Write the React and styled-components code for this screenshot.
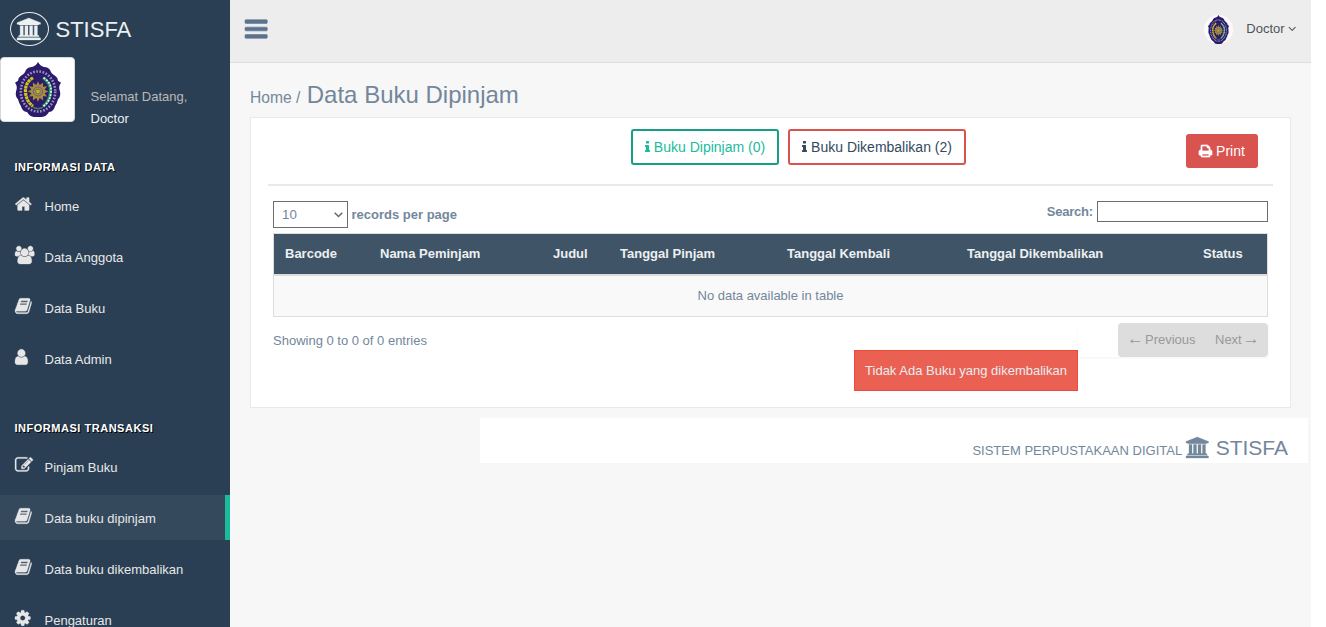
import React from 'react';
import styled, { createGlobalStyle, css } from 'styled-components';

const GlobalStyle = createGlobalStyle`
  *, *::before, *::after { box-sizing: border-box; }
  body {
    margin: 0;
    background: #fff;
    color: #73879c;
    font-family: "Liberation Sans", Arial, sans-serif;
    font-size: 13px;
    line-height: 19px;
    overflow: hidden;
  }
`;

const PATHS = {
  home: ['64 0 1664 1792', 'M1472 992v480q0 26-19 45t-45 19h-384v-384h-256v384h-384q-26 0-45-19t-19-45v-480q0-1 .5-3t.5-3l575-474 575 474q1 2 1 6zm223-69l-62 74q-8 9-21 11h-3q-13 0-21-7l-692-577-692 577q-12 8-24 7-13-2-21-11l-62-74q-8-10-7-23.5t11-21.5l719-599q32-26 76-26t76 26l244 204v-195q0-14 9-23t23-9h192q14 0 23 9t9 23v408l219 182q10 8 11 21.5t-7 23.5z'],
  users: ['-64 0 1920 1792', 'M529 896q-162 5-265 128h-134q-82 0-138-40.5t-56-118.5q0-353 124-353 6 0 43.5 21t97.5 42.5 119 21.5q67 0 133-23-5 37-5 66 0 159 93 293zm1071 637q0 120-73 189.5t-194 69.5h-874q-121 0-194-69.5t-73-189.5q0-53 3.5-103.5t14-109 26.5-108.5 43-97.5 62-81 85.5-53.5 111.5-20q10 0 43 21.5t73 48 107 48 135 21.5 135-21.5 107-48 73-48 43-21.5q61 0 111.5 20t85.5 53.5 62 81 43 97.5 26.5 108.5 14 109 3.5 103.5zm-1024-1277q0 106-75 181t-181 75-181-75-75-181 75-181 181-75 181 75 75 181zm704 384q0 159-112.5 271.5t-271.5 112.5-271.5-112.5-112.5-271.5 112.5-271.5 271.5-112.5 271.5 112.5 112.5 271.5zm576 225q0 78-56 118.5t-138 40.5h-134q-103-123-265-128 93-134 93-293 0-29-5-66 66 23 133 23 59 0 119-21.5t97.5-42.5 43.5-21q124 0 124 353zm-128-609q0 106-75 181t-181 75-181-75-75-181 75-181 181-75 181 75 75 181z'],
  book: ['64 0 1664 1792', 'M1703 478q40 57 18 129l-275 906q-19 64-76.5 107.5t-122.5 43.5h-923q-77 0-148.5-53.5t-99.5-131.5q-24-67-2-127 0-4 3-27t4-37q1-8-3-21.5t-3-19.5q2-11 8-21t16.5-23.5 16.5-23.5q23-38 45-91.5t30-91.5q3-10 .5-30t-.5-28q3-11 17-28t17-23q21-36 42-92t25-90q1-9-2.5-32t.5-28q4-13 22-30.5t22-22.5q19-26 42.5-84.5t27.5-96.5q1-8-3-25.5t-2-26.5q2-8 9-18t18-23 17-21q8-12 16.5-30.5t15-35 16-36 19.5-32 26.5-23.5 36-11.5 47.5 5.5l-1 3q38-9 51-9h761q74 0 114 56t18 130l-274 906q-36 119-71.5 153.5t-128.5 34.5h-869q-27 0-38 15-11 16-1 43 24 70 144 70h923q29 0 56-15.5t35-41.5l300-987q7-22 5-57 38 15 59 43zm-1064 2q-4 13 2 22.5t20 9.5h608q13 0 25.5-9.5t16.5-22.5l21-64q4-13-2-22.5t-20-9.5h-608q-13 0-25.5 9.5t-16.5 22.5zm-83 256q-4 13 2 22.5t20 9.5h608q13 0 25.5-9.5t16.5-22.5l21-64q4-13-2-22.5t-20-9.5h-608q-13 0-25.5 9.5t-16.5 22.5z'],
  user: ['256 0 1280 1792', 'M1536 1399q0 109-62.5 187t-150.5 78h-854q-88 0-150.5-78t-62.5-187q0-85 8.5-160.5t31.5-152 58.5-131 94-89 134.5-34.5q131 128 313 128t313-128q76 0 134.5 34.5t94 89 58.5 131 31.5 152 8.5 160.5zm-256-887q0 159-112.5 271.5t-271.5 112.5-271.5-112.5-112.5-271.5 112.5-271.5 271.5-112.5 271.5 112.5 112.5 271.5z'],
  edit: ['0 0 1792 1792', 'M888 1184l116-116-152-152-116 116v56h96v96h56zm440-720q-16-16-33 1l-350 350q-17 17-1 33t33-1l350-350q17-17 1-33zm80 594v190q0 119-84.5 203.5t-203.5 84.5h-832q-119 0-203.5-84.5t-84.5-203.5v-832q0-119 84.5-203.5t203.5-84.5h832q63 0 117 25 15 7 18 23 3 17-9 29l-49 49q-14 14-32 8-23-6-45-6h-832q-66 0-113 47t-47 113v832q0 66 47 113t113 47h832q66 0 113-47t47-113v-126q0-13 9-22l64-64q15-15 35-7t20 29zm-96-738l288 288-672 672h-288v-288zm444 132l-92 92-288-288 92-92q28-28 68-28t68 28l152 152q28 28 28 68t-28 68z'],
  cog: ['128 0 1536 1792', 'M1152 896q0-106-75-181t-181-75-181 75-75 181 75 181 181 75 181-75 75-181zm512-109v222q0 12-8 23t-20 13l-185 28q-19 54-39 91 35 50 107 138 10 12 10 25t-9 23q-27 37-99 108t-94 71q-12 0-26-9l-138-108q-44 23-91 38-16 136-29 186-7 28-36 28h-222q-14 0-24.5-8.5t-11.5-21.5l-28-184q-49-16-90-37l-141 107q-10 9-25 9-14 0-25-11-126-114-165-168-7-10-7-23 0-12 8-23 15-21 51-66.5t54-70.5q-27-50-41-99l-183-27q-13-2-21-12.5t-8-23.5v-222q0-12 8-23t19-13l186-28q14-46 39-92-40-57-107-138-10-12-10-24 0-10 9-23 26-36 98.5-107.5t94.5-71.5q13 0 26 10l138 107q44-23 91-38 16-136 29-186 7-28 36-28h222q14 0 24.5 8.5t11.5 21.5l28 184q49 16 90 37l142-107q9-9 24-9 13 0 25 10 129 119 165 170 7 8 7 22 0 12-8 23-15 21-51 66.5t-54 70.5q26 50 41 98l183 28q13 2 21 12.5t8 23.5z'],
  university: ['-128 0 1920 1792', 'M832 0l960 384v128h-128q0 26-20.5 45t-48.5 19h-1526q-28 0-48.5-19t-20.5-45h-128v-128zm-704 640h256v768h128v-768h256v768h128v-768h256v768h128v-768h256v768h59q28 0 48.5 19t20.5 45v64h-1664v-64q0-26 20.5-45t48.5-19h59v-768zm1595 960q28 0 48.5 19t20.5 45v128h-1920v-128q0-26 20.5-45t48.5-19h1782z'],
  print: ['64 0 1664 1792', 'M448 1536h896v-256h-896v256zm0-640h896v-384h-160q-40 0-68-28t-28-68v-160h-640v640zm1152 64q0-26-19-45t-45-19-45 19-19 45 19 45 45 19 45-19 19-45zm128 0v416q0 13-9.5 22.5t-22.5 9.5h-224v160q0 40-28 68t-68 28h-960q-40 0-68-28t-28-68v-160h-224q-13 0-22.5-9.5t-9.5-22.5v-416q0-79 56.5-135.5t135.5-56.5h64v-544q0-40 28-68t68-28h672q40 0 88 20t76 48l152 152q28 28 48 76t20 88v256h64q79 0 135.5 56.5t56.5 135.5z'],
  info: ['576 0 640 1792', 'M1216 1344v128q0 26-19 45t-45 19h-512q-26 0-45-19t-19-45v-128q0-26 19-45t45-19h64v-384h-64q-26 0-45-19t-19-45v-128q0-26 19-45t45-19h384q26 0 45 19t19 45v576h64q26 0 45 19t19 45zm-128-1152v192q0 26-19 45t-45 19h-256q-26 0-45-19t-19-45v-192q0-26 19-45t45-19h256q26 0 45 19t19 45z'],
  bars: ['128 0 1536 1792', 'M1664 1344v128q0 26-19 45t-45 19h-1408q-26 0-45-19t-19-45v-128q0-26 19-45t45-19h1408q26 0 45 19t19 45zm0-512v128q0 26-19 45t-45 19h-1408q-26 0-45-19t-19-45v-128q0-26 19-45t45-19h1408q26 0 45 19t19 45zm0-512v128q0 26-19 45t-45 19h-1408q-26 0-45-19t-19-45v-128q0-26 19-45t45-19h1408q26 0 45 19t19 45z'],
  angle: ['320 0 1152 1792', 'M1395 736q0 13-10 23l-466 466q-10 10-23 10t-23-10l-466-466q-10-10-10-23t10-23l50-50q10-10 23-10t23 10l393 393 393-393q10-10 23-10t23 10l50 50q10 10 10 23z'],
};

const Svg = styled.svg`
  display: block;
  flex: none;
  height: ${(p) => p.$size}px;
  fill: currentColor;
  stroke: currentColor;
  stroke-width: ${(p) => p.$weight};
  overflow: visible;
`;

function Icon({ name, size, weight = 0 }) {
  const [box, d] = PATHS[name];
  const width = (Number(box.split(' ')[2]) / 1792) * size;
  return (
    <Svg viewBox={box} width={width} $size={size} $weight={weight} aria-hidden="true">
      <path d={d} />
    </Svg>
  );
}

const Emblem = styled.svg`
  display: block;
  width: ${(p) => p.$w}px;
  height: ${(p) => p.$h}px;
`;

function Crest({ w, h }) {
  const rays = Array.from({ length: 12 }, (_, i) => i * 30);
  return (
    <Emblem $w={w} $h={h} viewBox="0 0 46 56" preserveAspectRatio="none" aria-hidden="true">
      <path
        fill="#2c1a6b"
        d="M23 0Q25 4 29 5Q33 5 35 8Q36 12 40 14Q43 16 43 19L46 21Q43 25 45 30Q46 35 43 38Q42 42 40 45Q39 50 34 51Q31 56 27 56H19Q15 56 12 51Q7 50 6 45Q4 42 3 38Q0 35 1 30Q3 25 0 21L3 19Q3 16 6 14Q10 12 11 8Q13 5 17 5Q21 4 23 0Z"
      />
      <ellipse cx="23" cy="30" rx="17.2" ry="20.4" fill="none" stroke="#b4b0cd" strokeWidth="2.6" strokeDasharray="1.7 1.5" opacity=".8" />
      <ellipse cx="23" cy="30" rx="15.4" ry="18.4" fill="#2c1a6b" />
      <path d="M18 16Q10 21 10.5 30Q11 40 18 45" fill="none" stroke="#d2c51d" strokeWidth="3.2" strokeDasharray="3 .6" />
      <path d="M28 16Q36 21 35.5 30Q35 40 28 45" fill="none" stroke="#249662" strokeWidth="3.2" />
      <path d="M28.6 16Q36.6 21 36 30Q35.5 40 28.5 45" fill="none" stroke="#e9efed" strokeWidth="1.7" strokeDasharray="2 1.2" />
      <path d="M18 46Q23 49 28 46" fill="none" stroke="#40805a" strokeWidth="1.6" />
      <g fill="#a58f39">
        {rays.map((a) => (
          <path key={a} d="M20.6 25L23 19.5L25.4 25Z" transform={`rotate(${a} 23 30)`} />
        ))}
        <circle cx="23" cy="30" r="6.8" />
      </g>
      <circle cx="23" cy="30" r="4.6" fill="none" stroke="#67558a" strokeWidth=".9" />
      <circle cx="23" cy="30" r="2.3" fill="#cab12c" stroke="#5b4788" strokeWidth=".6" />
    </Emblem>
  );
}

const Page = styled.div`
  display: flex;
  width: 1311px;
  height: 627px;
  overflow: hidden;
  background: #f7f7f7;
`;

const Sidebar = styled.aside`
  flex: none;
  width: 230px;
  height: 627px;
  overflow: hidden;
  background: #2a3f54;
  color: #ecf0f1;
`;

const Brand = styled.div`
  display: flex;
  align-items: center;
  height: 57px;
  padding-left: 10px;
  gap: 6.5px;
  font-size: 22px;
`;

const BrandName = styled.span`
  padding-top: 2px;
`;

const BrandRing = styled.span`
  display: flex;
  align-items: center;
  justify-content: center;
  width: 39px;
  height: 34px;
  padding-right: 1px;
  border: 1px solid #eaeaea;
  border-radius: 50%;
`;

const Profile = styled.div`
  display: flex;
  height: 65px;
`;

const Portrait = styled.div`
  display: flex;
  align-items: center;
  justify-content: center;
  width: 75px;
  height: 65px;
  background: #fff;
  border: 1px solid #d5d9dd;
  border-radius: 4px;
`;

const Welcome = styled.div`
  padding: 30px 0 0 15.5px;
  color: #bab8b8;
`;

const UserName = styled.div`
  margin-top: 3px;
  color: #ecf0f1;
`;

const MenuTitle = styled.h3`
  margin: ${(p) => p.$top}px 0 0;
  padding-left: 14.5px;
  height: 23px;
  color: #fff;
  font-size: 11px;
  font-weight: bold;
  letter-spacing: 0.52px;
  line-height: 14px;
  text-transform: uppercase;
  text-shadow: 1px 1px #000;
`;

const MenuItem = styled.a`
  display: flex;
  align-items: center;
  height: 45px;
  margin-bottom: 6px;
  padding: 1px 0 0 14.5px;
  color: #e7e7e7;
  font-weight: 500;
  ${(p) => p.$active && css`
    background: #35495d;
    border-right: 5px solid #1abb9c;
  `}
`;

const MenuIcon = styled.span`
  width: 30px;
  margin-top: -4px;
`;

const Main = styled.div`
  flex: 1;
  min-width: 0;
`;

const TopBar = styled.header`
  display: flex;
  justify-content: space-between;
  height: 63px;
  padding: 0 15px;
  background: #ededed;
  border-bottom: 1px solid #d9dee4;
`;

const Toggle = styled.span`
  padding-top: 16px;
  color: #5a738e;
`;

const Account = styled.div`
  display: flex;
  align-items: center;
  height: 57px;
  color: #515356;
`;

const Avatar = styled.span`
  display: flex;
  align-items: center;
  justify-content: center;
  width: 29px;
  height: 29px;
  margin: 2px 13.5px 0 0;
  border-radius: 50%;
  background: #fafafa;
`;

const Caret = styled.span`
  margin-left: 3px;
`;

const Title = styled.div`
  display: flex;
  align-items: baseline;
  height: 54px;
  padding: 17px 0 0 20px;
  font-size: 24px;
  line-height: 30px;
`;

const Crumb = styled.span`
  margin-right: 6.5px;
  font-size: 15.6px;
`;

const Card = styled.section`
  height: 291px;
  margin: 0 20px;
  padding: 0 17px;
  background: #fff;
  border: 1px solid #e6e9ed;
`;

const Actions = styled.div`
  display: flex;
  height: 68px;
  padding: 11px 15px 0 363px;
  border-bottom: 2px solid #e6e9ed;
  font-size: 14px;
`;

const FilterButton = styled.a`
  display: flex;
  align-items: center;
  justify-content: center;
  gap: 4px;
  width: ${(p) => p.$w}px;
  height: 36px;
  margin-right: 9px;
  border: 2px solid ${(p) => p.$border};
  border-radius: 3px;
  color: ${(p) => p.$color};
  white-space: nowrap;
`;

const PrintButton = styled.a`
  display: flex;
  align-items: center;
  justify-content: center;
  gap: 4px;
  width: 72px;
  height: 34px;
  margin: 5px 0 0 auto;
  border-radius: 3px;
  background: #d9534f;
  color: #fff;
`;

const TableArea = styled.div`
  padding: 15px 5px 0;
`;

const Controls = styled.div`
  display: flex;
  justify-content: space-between;
  height: 32px;
  font-weight: bold;
`;

const Length = styled.label`
  display: flex;
  gap: 3.5px;
  line-height: 27px;
`;

const Select = styled.span`
  display: flex;
  align-items: center;
  justify-content: space-between;
  width: 75px;
  height: 27px;
  padding: 0 4px 0 8px;
  border: 1px solid #6d6d6d;
  font-weight: normal;
  font-size: 13.33px;
`;

const SearchLabel = styled.label`
  display: flex;
  gap: 4px;
  line-height: 21px;
  letter-spacing: -0.2px;
`;

const SearchInput = styled.input`
  width: 171px;
  height: 21px;
  border: 1px solid #6d6d6d;
  background: #fff;
`;

const Table = styled.div`
  height: 84px;
  border: 1px solid #ddd;
`;

const HeadRow = styled.div`
  display: grid;
  grid-template-columns: 95px 173px 67px 167px 180px 236px 1fr;
  height: 42px;
  padding-left: 11px;
  background: #405467;
  border-bottom: 2px solid #ddd;
  color: #ecf0f1;
  font-weight: bold;
  line-height: 40px;
`;

const EmptyRow = styled.div`
  height: 40px;
  background: #f9f9f9;
  line-height: 40px;
  text-align: center;
`;

const TableFoot = styled.div`
  display: flex;
  justify-content: space-between;
  padding-top: 6px;
`;

const Info = styled.div`
  padding-top: 8px;
`;

const Pager = styled.div`
  display: flex;
  justify-content: flex-end;
  width: 190px;
  height: 34px;
  box-shadow: 0 1px 2px rgba(0, 0, 0, 0.05);
`;

const PageLink = styled.span`
  display: flex;
  gap: 1px;
  width: ${(p) => p.$w}px;
  padding-left: ${(p) => (p.$last ? 10 : 9)}px;
  background: #ddd;
  color: #999;
  line-height: 33px;
  white-space: nowrap;
  border-radius: ${(p) => (p.$last ? '0 4px 4px 0' : '4px 0 0 4px')};
`;

const Arrow = styled.span`
  font-size: 17px;
  line-height: 31px;
`;

const Notice = styled.div`
  position: absolute;
  left: 854px;
  top: 350px;
  width: 224px;
  height: 41px;
  border: 1px solid #e74c3c;
  background: #ea6153;
  color: #e9edef;
  line-height: 39px;
  text-align: center;
  white-space: nowrap;
`;

const Footer = styled.footer`
  display: flex;
  justify-content: flex-end;
  height: 45px;
  margin: 10px 3px 0 250px;
  padding-right: 20px;
  background: #fff;
`;

const FooterText = styled.span`
  padding-top: 23px;
  white-space: nowrap;
`;

const FooterIcon = styled.span`
  padding: 19px 7px 0 4px;
`;

const FooterBrand = styled.span`
  padding-top: 20px;
  font-size: 21px;
`;

const dataMenu = [
  ['home', 'Home'],
  ['users', 'Data Anggota'],
  ['book', 'Data Buku'],
  ['user', 'Data Admin'],
];

const transactionMenu = [
  ['edit', 'Pinjam Buku'],
  ['book', 'Data buku dipinjam', true],
  ['book', 'Data buku dikembalikan'],
  ['cog', 'Pengaturan'],
];

const columns = ['Barcode', 'Nama Peminjam', 'Judul', 'Tanggal Pinjam', 'Tanggal Kembali', 'Tanggal Dikembalikan', 'Status'];

function Menu({ items }) {
  return items.map(([icon, label, active]) => (
    <MenuItem key={label} $active={active}>
      <MenuIcon><Icon name={icon} size={18} weight={30} /></MenuIcon>
      {label}
    </MenuItem>
  ));
}

export default function App() {
  return (
    <>
      <GlobalStyle />
      <Page>
        <Sidebar>
          <Brand>
            <BrandRing><Icon name="university" size={22} weight={24} /></BrandRing>
            <BrandName>STISFA</BrandName>
          </Brand>
          <Profile>
            <Portrait><Crest w={46} h={55} /></Portrait>
            <Welcome>
              Selamat Datang,
              <UserName>Doctor</UserName>
            </Welcome>
          </Profile>
          <MenuTitle $top={38}>Informasi Data</MenuTitle>
          <Menu items={dataMenu} />
          <MenuTitle $top={40}>Informasi Transaksi</MenuTitle>
          <Menu items={transactionMenu} />
        </Sidebar>
        <Main>
          <TopBar>
            <Toggle><Icon name="bars" size={26} weight={40} /></Toggle>
            <Account>
              <Avatar><Crest w={21} h={29} /></Avatar>
              Doctor
              <Caret><Icon name="angle" size={13} /></Caret>
            </Account>
          </TopBar>
          <Title>
            <Crumb>Home /</Crumb>
            Data Buku Dipinjam
          </Title>
          <Card>
            <Actions>
              <FilterButton $w={148} $border="#169f85" $color="#1abb9c">
                <Icon name="info" size={14} />
                Buku Dipinjam (0)
              </FilterButton>
              <FilterButton $w={178} $border="#d9534f" $color="#34495e">
                <Icon name="info" size={14} />
                Buku Dikembalikan (2)
              </FilterButton>
              <PrintButton>
                <Icon name="print" size={14} weight={90} />
                Print
              </PrintButton>
            </Actions>
            <TableArea>
              <Controls>
                <Length>
                  <Select>
                    10
                    <svg width="9" height="6" viewBox="0 0 9 6" fill="none" stroke="#666" strokeWidth="1.5" aria-hidden="true">
                      <path d="M.7 .8L4.5 4.5L8.3 .8" />
                    </svg>
                  </Select>
                  records per page
                </Length>
                <SearchLabel>
                  Search:
                  <SearchInput />
                </SearchLabel>
              </Controls>
              <Table>
                <HeadRow>
                  {columns.map((c) => <span key={c}>{c}</span>)}
                </HeadRow>
                <EmptyRow>No data available in table</EmptyRow>
              </Table>
              <TableFoot>
                <Info>Showing 0 to 0 of 0 entries</Info>
                <Pager>
                  <PageLink $w={87}><Arrow>←</Arrow>Previous</PageLink>
                  <PageLink $w={63} $last>Next<Arrow>→</Arrow></PageLink>
                </Pager>
              </TableFoot>
            </TableArea>
          </Card>
          <Footer>
            <FooterText>SISTEM PERPUSTAKAAN DIGITAL</FooterText>
            <FooterIcon><Icon name="university" size={21} weight={24} /></FooterIcon>
            <FooterBrand>STISFA</FooterBrand>
          </Footer>
        </Main>
      </Page>
      <Notice>Tidak Ada Buku yang dikembalikan</Notice>
    </>
  );
}
